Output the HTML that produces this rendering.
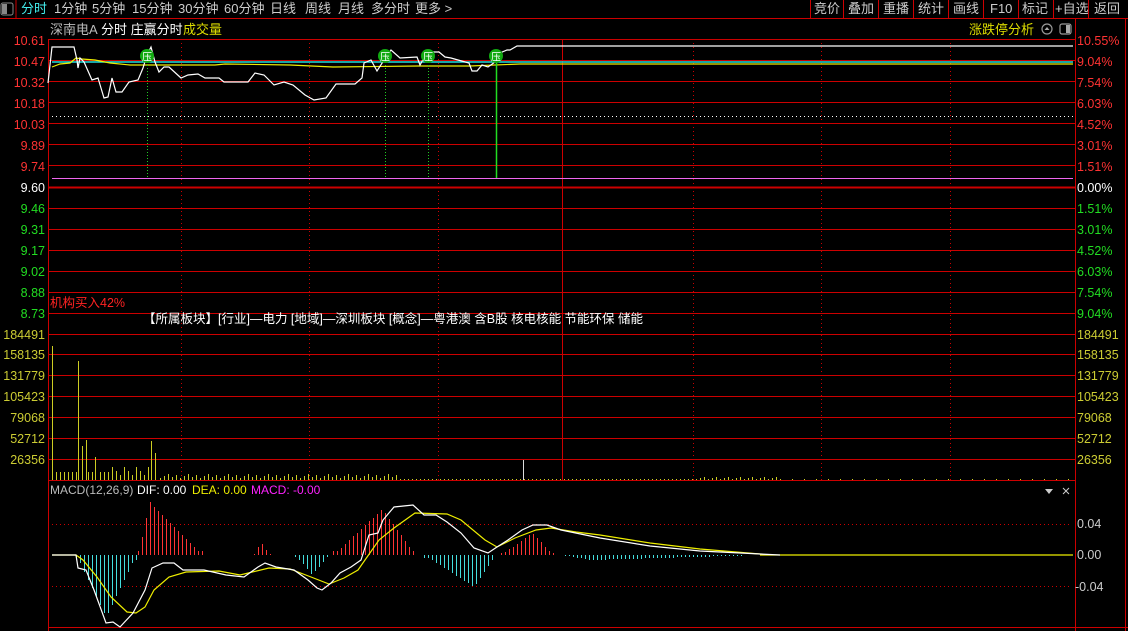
<!DOCTYPE html>
<html><head><meta charset="utf-8"><style>
body{margin:0;background:#000;width:1128px;height:631px;overflow:hidden;font-family:"Liberation Sans","Noto Sans CJK SC",sans-serif}
svg{position:absolute;left:0;top:0}
text{font-family:"Liberation Sans","Noto Sans CJK SC",sans-serif}
</style></head><body>
<svg width="1128" height="631" xmlns="http://www.w3.org/2000/svg" id="s">
<rect width="1128" height="631" fill="#000"/>
<rect x="1" y="3" width="12" height="12" rx="2" fill="none" stroke="#888"/>
<rect x="2" y="4" width="5" height="10" fill="#888"/>
<line x1="16" y1="0" x2="16" y2="18" stroke="#c00"/>
<line x1="0" y1="18.5" x2="1128" y2="18.5" stroke="#c00"/>
<g font-size="13" fill="#ccc">
<text x="21" y="13" fill="#4ee">分时</text>
<text x="54" y="13">1分钟</text>
<text x="92" y="13">5分钟</text>
<text x="132" y="13">15分钟</text>
<text x="178" y="13">30分钟</text>
<text x="224" y="13">60分钟</text>
<text x="270" y="13">日线</text>
<text x="305" y="13">周线</text>
<text x="338" y="13">月线</text>
<text x="371" y="13">多分时</text>
<text x="415" y="13">更多 &gt;</text>
<text x="814" y="13">竞价</text>
<text x="848" y="13">叠加</text>
<text x="883" y="13">重播</text>
<text x="918" y="13">统计</text>
<text x="953" y="13">画线</text>
<text x="990" y="13">F10</text>
<text x="1022" y="13">标记</text>
<text x="1055" y="13">+自选</text>
<text x="1094" y="13">返回</text>
</g>
<g stroke="#c00"><line x1="810.5" y1="0" x2="810.5" y2="18"/><line x1="843.5" y1="0" x2="843.5" y2="18"/><line x1="878.5" y1="0" x2="878.5" y2="18"/><line x1="913.5" y1="0" x2="913.5" y2="18"/><line x1="948.5" y1="0" x2="948.5" y2="18"/><line x1="983.5" y1="0" x2="983.5" y2="18"/><line x1="1018.5" y1="0" x2="1018.5" y2="18"/><line x1="1053.5" y1="0" x2="1053.5" y2="18"/><line x1="1088.5" y1="0" x2="1088.5" y2="18"/></g>
<g font-size="13">
<text x="50" y="34" fill="#bbb">深南电A</text>
<text x="101" y="34" fill="#fff">分时 庄赢分时</text>
<text x="183" y="34" fill="#dd0">成交量</text>
<text x="969" y="34" fill="#dd0">涨跌停分析</text>
</g>
<circle cx="1047" cy="29" r="5" fill="none" stroke="#999" stroke-width="1.2"/><path d="M1044.5 30 L1047 27 L1049.5 30Z" fill="#aaa"/>
<rect x="1060" y="24" width="11" height="10" rx="2" fill="none" stroke="#999" stroke-width="1.2"/><rect x="1066" y="25" width="4" height="8" fill="#aaa"/>
<g stroke="#c00" fill="none" shape-rendering="crispEdges">
<line x1="48.5" y1="39" x2="48.5" y2="631"/>
<line x1="1075.5" y1="19" x2="1075.5" y2="631"/>
<line x1="1125.5" y1="19" x2="1125.5" y2="631"/>
<line x1="48" y1="627.5" x2="1128" y2="627.5"/>
<line x1="48" y1="480.5" x2="1075" y2="480.5"/>
</g>
<g id="grid" stroke="#c00" shape-rendering="crispEdges"></g>
<g stroke="#c00" stroke-dasharray="1,3" id="vd" shape-rendering="crispEdges"></g>
<line x1="562.5" y1="39" x2="562.5" y2="480" stroke="#c00" shape-rendering="crispEdges"/>
<g font-size="12.5" text-anchor="end">
<text x="45" y="45" fill="#f33">10.61</text><text x="45" y="66" fill="#f33">10.47</text><text x="45" y="87" fill="#f33">10.32</text><text x="45" y="108" fill="#f33">10.18</text><text x="45" y="129" fill="#f33">10.03</text><text x="45" y="150" fill="#f33">9.89</text><text x="45" y="171" fill="#f33">9.74</text><text x="45" y="192" fill="#fff">9.60</text>
<text x="45" y="213" fill="#2d2">9.46</text><text x="45" y="234" fill="#2d2">9.31</text><text x="45" y="255" fill="#2d2">9.17</text><text x="45" y="276" fill="#2d2">9.02</text><text x="45" y="297" fill="#2d2">8.88</text><text x="45" y="318" fill="#2d2">8.73</text>
<g fill="#cc3"><text x="45" y="339">184491</text><text x="45" y="359">158135</text><text x="45" y="380">131779</text><text x="45" y="401">105423</text><text x="45" y="422">79068</text><text x="45" y="443">52712</text><text x="45" y="464">26356</text></g>
</g>
<g font-size="12.5">
<text x="1077" y="45" fill="#f33">10.55%</text><text x="1077" y="66" fill="#f33">9.04%</text><text x="1077" y="87" fill="#f33">7.54%</text><text x="1077" y="108" fill="#f33">6.03%</text><text x="1077" y="129" fill="#f33">4.52%</text><text x="1077" y="150" fill="#f33">3.01%</text><text x="1077" y="171" fill="#f33">1.51%</text><text x="1077" y="192" fill="#fff">0.00%</text>
<text x="1077" y="213" fill="#2d2">1.51%</text><text x="1077" y="234" fill="#2d2">3.01%</text><text x="1077" y="255" fill="#2d2">4.52%</text><text x="1077" y="276" fill="#2d2">6.03%</text><text x="1077" y="297" fill="#2d2">7.54%</text><text x="1077" y="318" fill="#2d2">9.04%</text>
<g fill="#cc3"><text x="1077" y="339">184491</text><text x="1077" y="359">158135</text><text x="1077" y="380">131779</text><text x="1077" y="401">105423</text><text x="1077" y="422">79068</text><text x="1077" y="443">52712</text><text x="1077" y="464">26356</text></g>
<g fill="#ccc"><text x="1077" y="528">0.04</text><text x="1077" y="559">0.00</text><text x="1075" y="591">-0.04</text></g>
</g>
<line x1="52" y1="116.5" x2="1073" y2="116.5" stroke="#fff" stroke-dasharray="1,3"/>
<line x1="52" y1="178.5" x2="1073" y2="178.5" stroke="#e6e"/>
<line x1="52" y1="62" x2="1073" y2="62" stroke="#2dd" stroke-width="1.5"/>
<polyline fill="none" stroke="#ee0" stroke-width="1.2" points="52,67 60,64 70,63 76,58 82,59 95,60 110,63 130,65 215,65 225,64 290,65 333,67 418,66 470,66 520,64 1073,64"/>
<polyline fill="none" stroke="#fff" stroke-width="1.2" points="48,83 52,47 74,47 77,60 78,68 80,58 84,62 92,80 98,78 104,98 108,97 112,78 116,92 122,92 129,82 138,80 143,68 147,55 151,47 155,62 159,72 164,67 169,67 181,78 188,75 198,74 205,78 219,78 224,82 248,82 255,73 264,75 274,85 284,82 293,85 305,95 314,100 326,98 336,84 355,84 362,78 364,63 371,60 377,71 384,60 391,50 400,58 417,57 420,65 427,52 439,52 445,57 451,58 458,60 469,63 472,71 477,71 482,65 488,67 495,62 500,53 507,50 510,50 517,46 1073,46"/>
<g id="mk"></g>
<text x="50" y="307" font-size="12.5" fill="#f22">机构买入42%</text>
<text x="143" y="323" font-size="12.5" fill="#fff">【所属板块】[行业]—电力 [地域]—深圳板块 [概念]—粤港澳 含B股 核电核能 节能环保 储能</text>
<g id="vol" shape-rendering="crispEdges"></g>
<g font-size="12">
<text x="50" y="494" fill="#bbb">MACD(12,26,9)</text>
<text x="137" y="494" fill="#fff">DIF: 0.00</text>
<text x="192" y="494" fill="#ee0">DEA: 0.00</text>
<text x="251" y="494" fill="#f2f">MACD: -0.00</text>
</g>
<path d="M1045 489 L1053 489 L1049 494Z" fill="#ccc"/>
<path d="M1063 488 L1069 494 M1069 488 L1063 494" stroke="#ccc"/>
<line x1="52" y1="524.5" x2="1072" y2="524.5" stroke="#c00" stroke-dasharray="1,3"/>
<line x1="52" y1="586.5" x2="1072" y2="586.5" stroke="#c00" stroke-dasharray="1,3"/>
<g id="mb" shape-rendering="crispEdges"></g>
<line x1="52" y1="555" x2="76" y2="555" stroke="#ee0" stroke-width="1.2"/>
<line x1="760" y1="555" x2="1073" y2="555" stroke="#ee0" stroke-width="1.2"/>
<polyline fill="none" stroke="#ee0" stroke-width="1.2" points="76,555 83,560 97,577 111,597 127,612 136,613 145,607 154,590 169,577 186,572 219,571 240,575 269,568 290,569 311,577 329,584 344,578 358,570 365,560 379,540 394,528 415,513 447,514 461,520 485,540 497,547 515,538 536,530 551,528 576,532 600,535 650,543 700,549 760,554"/>
<polyline fill="none" stroke="#fff" stroke-width="1.2" points="52,555 76,555 78,568 86,570 94,590 106,623 113,622 120,627 133,613 145,590 152,568 163,563 174,563 183,570 204,570 226,575 244,577 258,567 265,563 276,567 294,570 308,580 317,588 322,590 331,583 340,573 351,567 361,560 369,535 378,533 383,520 394,507 413,505 424,515 436,515 447,522 461,533 474,548 488,553 497,547 508,540 522,530 533,525 547,525 561,530 600,538 650,546 700,551 780,555"/>
</svg>
<script>
var s="http://www.w3.org/2000/svg";
function el(p,t,a){var e=document.createElementNS(s,t);for(var k in a)e.setAttribute(k,a[k]);document.getElementById(p).appendChild(e);return e;}
[39,60,81,102,123,144,165,187,208,229,250,271,292,313,334,354,375,396,417,438,459].forEach(function(y){el("grid","line",{x1:48,x2:1075,y1:y+.5,y2:y+.5,"stroke-width":y==187?2:1});});
[181,309,438,693,821,950].forEach(function(x){el("vd","line",{x1:x+.5,x2:x+.5,y1:39,y2:480});});
[[147,"#2c2",1],[385,"#2c2",1],[428,"#2c2",1],[496,"#2d2",0]].forEach(function(m){
 el("mk","line",{x1:m[0]+.5,x2:m[0]+.5,y1:62,y2:178,stroke:m[1],"stroke-dasharray":m[2]?"1,2":"none","stroke-width":m[2]?1:1.5});
 el("mk","circle",{cx:m[0],cy:56,r:7,fill:"#1a1"});
 var t=el("mk","text",{x:m[0],y:60.5,"font-size":"10","text-anchor":"middle",fill:"#fff"});t.textContent="压";});
var big={52:346,78:361,82:446,86:440,95:457,151:441,155:453};
for(var k in big){var x=+k;el("vol","line",{x1:x+.5,x2:x+.5,y1:480,y2:big[k],stroke:"#cc2"});}
for(var x=56;x<1070;x+=4){var h;
 if(x==80||x==84||x==96||x==152||x==156)continue;
 if(x<110)h=8+((x*7)%14);else if(x<160)h=5+((x*5)%12);else if(x<400)h=2+((x*3)%5);else if(x<700)h=1+((x*3)%4);else h=1+((x)%3);
 if(x>=780)h=(x%12==0)?1:0; if(h>0) el("vol","line",{x1:x+.5,x2:x+.5,y1:480,y2:480-h,stroke:"#cc2"});}
el("vol","line",{x1:523.5,x2:523.5,y1:480,y2:460,stroke:"#ddd"});
function bar(x,v){el("mb","line",{x1:x+.5,x2:x+.5,y1:555,y2:555-v,stroke:v>0?"#f33":"#4dd"});}
function seg(a,b,pk,pp){for(var x=a;x<=b;x+=4){var t=(x-a)/(b-a);var f=t<pp?t/pp:(1-t)/(1-pp);bar(x,Math.round(pk*Math.max(0.08,f)));}}
seg(76,136,-62,0.5);seg(138,202,53,0.18);seg(254,270,13,0.4);seg(295,329,-20,0.5);seg(333,415,46,0.6);seg(424,495,-32,0.7);seg(501,553,22,0.6);seg(561,760,-5,0.15);
</script>
</body></html>
